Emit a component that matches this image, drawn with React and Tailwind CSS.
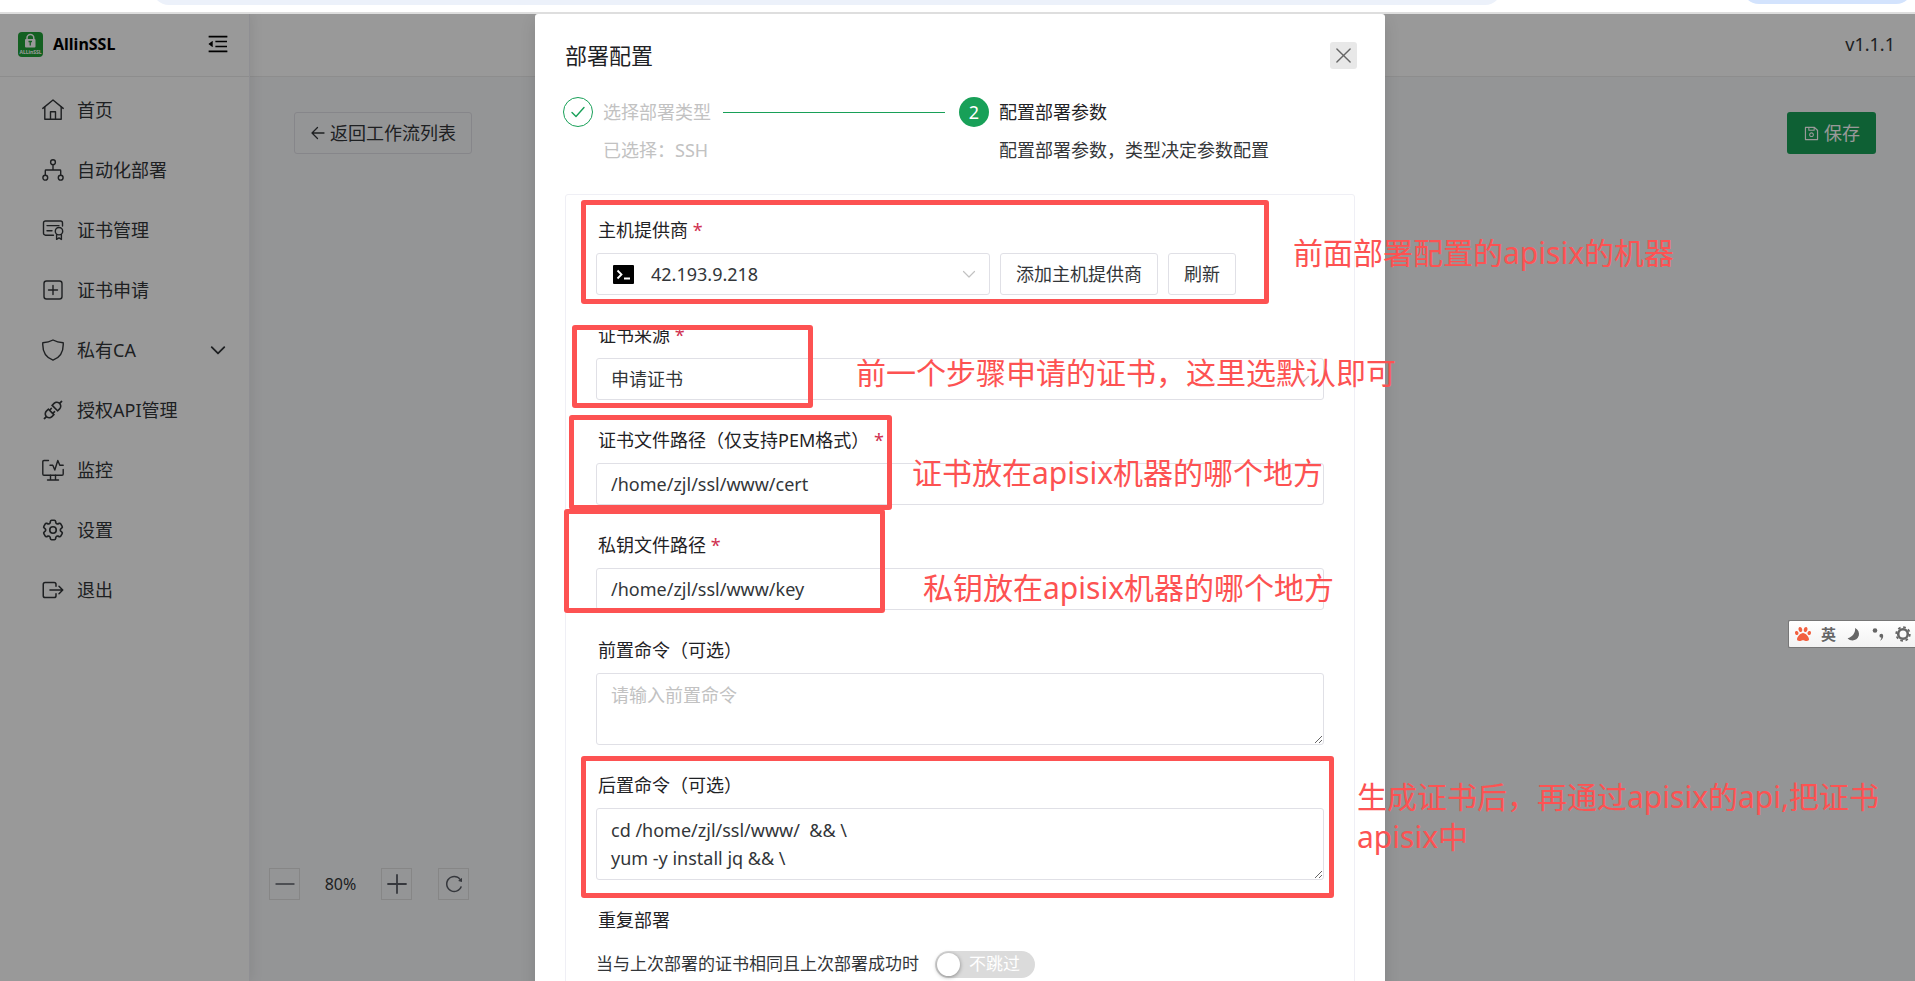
import React, { useState } from 'react';
import clsx from 'clsx';
import { AiOutlineApi, AiOutlineMenuFold, AiOutlineReload, AiOutlineSave } from 'react-icons/ai';
import { IoExitOutline } from 'react-icons/io5';
import { HiOutlineCog6Tooth } from 'react-icons/hi2';
import { FaPaw } from 'react-icons/fa';

function Icon({ size = 22, box = 22, sw = 1.4, className, children }) {
  return (
    <svg
      width={size}
      height={size}
      viewBox={`0 0 ${box} ${box}`}
      fill="none"
      stroke="currentColor"
      strokeWidth={sw}
      strokeLinecap="round"
      strokeLinejoin="round"
      className={clsx('shrink-0', className)}
      aria-hidden="true"
    >
      {children}
    </svg>
  );
}

const HomeIcon = () => (
  <Icon>
    <path d="M.8 9.4 11 1l10.2 8.4" />
    <path d="M2.8 8v12.2h16.4V8" />
    <path d="M8.5 20v-7.200h5V20" />
  </Icon>
);

const FlowIcon = () => (
  <Icon>
    <circle cx="11" cy="3.2" r="2.4" />
    <circle cx="3.3" cy="18.700" r="2.4" />
    <circle cx="18.7" cy="18.7" r="2.4" />
    <path d="M11 5.8V11M3.3 16v-4.300q0-.7.7-.7h14q.7 0 .7.7V16" />
  </Icon>
);

const CertIcon = () => (
  <Icon>
    <path d="M11.5 16.2H3.500a2 2 0 0 1-2-2V4a2 2 0 0 1 2-2h15a2 2 0 0 1 2 2v3" />
    <path d="M5 6.6h12M5 11.8h5" />
    <circle cx="17" cy="12.2" r="3.7" />
    <path d="M14.6 15.4v5l2.4-1.5 2.4 1.5v-5" />
  </Icon>
);

const ApplyIcon = () => (
  <Icon>
    <rect x="2" y="2" width="18" height="18" rx="2.5" />
    <path d="M11 6.5v9M6.5 11h9" />
  </Icon>
);

const ShieldIcon = () => (
  <Icon>
    <path d="M11 1c2.8 1.6 6.2 2.5 10.2 2.7C21.7 12 19 18.2 11 21.2 3 18.2.3 12 .8 3.7 4.800 3.5 8.2 2.6 11 1z" />
  </Icon>
);

const MonitorIcon = () => (
  <Icon>
    <path d="M6.5 1.5H2a1.2 1.2 0 0 0-1.2 1.2V15A1.2 1.2 0 0 0 2 16.2h18a1.2 1.2 0 0 0 1.2-1.2v-4.5" />
    <path d="M8.5 16.2V21M13.5 16.2V21M5.5 21h11" />
    <path d="M8 6.2h2.8l2 4.8 3-9.5 2 4.7h3.4" />
  </Icon>
);

const ChevronDown = ({ size = 14, sw = 1.4, className }) => (
  <Icon size={size} box={14} sw={sw} className={className}>
    <path d="m1.5 4.5 5.5 5.500 5.5-5.5" />
  </Icon>
);

const NAV = [
  { label: '首页', icon: <HomeIcon /> },
  { label: '自动化部署', icon: <FlowIcon /> },
  { label: '证书管理', icon: <CertIcon /> },
  { label: '证书申请', icon: <ApplyIcon /> },
  { label: '私有CA', icon: <ShieldIcon />, expandable: true },
  { label: '授权API管理', icon: <AiOutlineApi size={24} className="-m-px" /> },
  { label: '监控', icon: <MonitorIcon /> },
  { label: '设置', icon: <HiOutlineCog6Tooth size={26} className="-m-0.5" /> },
  { label: '退出', icon: <IoExitOutline size={24} className="-m-px" /> },
];

function BrowserEdge() {
  return (
    <div className="flex h-[14px] shrink-0 items-end overflow-hidden border-b-2 border-[#dedede] bg-white">
      <div className="mb-[7px] ml-[152px] h-[34px] flex-1 rounded-full bg-[#ecf1fa]" />
      <div className="mb-2 ml-60 mr-0.5 h-[34px] w-[171px] rounded-full bg-[#d3e3fd]" />
    </div>
  );
}

function Logo() {
  return (
    <svg width="25" height="25" viewBox="0 0 25 25" aria-hidden="true">
      <rect width="25" height="25" rx="4" fill="#20a038" />
      <path d="M9 7.5V6a3.4 3.4 0 0 1 6.8 0v1.5" fill="none" stroke="#fff" strokeWidth="1.5" />
      <rect x="7" y="7" width="10.5" height="8.5" rx="1" fill="#fff" />
      <path d="M10.5 9.5h3.5M12.250 9.5v4" stroke="#20a038" strokeWidth="1.3" />
      <text x="12.5" y="21.5" textAnchor="middle" fontSize="5" fontWeight="700" fill="#fff" className="font-['Noto_Sans']">
        ALLinSSL
      </text>
    </svg>
  );
}

function Sidebar() {
  return (
    <aside className="z-10 flex w-[250px] shrink-0 flex-col border-r border-[#efeff5] bg-white shadow-[2px_0_12px_rgba(0,0,0,0.08)]">
      <div className="flex h-[63px] items-center border-b border-[#ebebeb] pb-0.5 pl-[18px] pr-[19px]">
        <Logo />
        <span className="ml-2.5 text-base font-bold text-black">AllinSSL</span>
        <button type="button" aria-label="收起菜单" className="ml-auto">
          <AiOutlineMenuFold size={24} />
        </button>
      </div>
      <nav className="flex flex-col pt-[3px]">
        {NAV.map((item) => (
          <a key={item.label} href="#" className="flex h-[60px] items-center pl-[42px] pr-[23px] text-[18px] text-[#333639]">
            {item.icon}
            <span className="ml-[13px]">{item.label}</span>
            {item.expandable && <ChevronDown size={16} sw={1.6} className="ml-auto" />}
          </a>
        ))}
      </nav>
    </aside>
  );
}

function Workspace() {
  const box = 'flex h-8 w-[31px] items-center justify-center border border-[#e0e0e0] text-[#5a5e66]';
  return (
    <div className="flex min-w-0 flex-1 flex-col bg-[#f7f8fa]">
      <header className="flex h-[63px] shrink-0 items-center justify-end border-b border-[#ebebeb] bg-white pb-0.5 pr-5 text-[18px] text-[#333639]">
        v1.1.1
      </header>
      <div className="flex flex-1 flex-col pb-[81px] pl-[19px] pr-[39px] pt-[35px]">
        <div className="flex items-center justify-between pl-[25px]">
          <button type="button" className="flex h-[42px] items-center gap-1 rounded-[3px] border border-[#e0e0e6] px-[15px] text-[18px] text-[#333639]">
            <Icon size={16} box={16} sw={1.3}>
              <path d="M14 8H2.5M7.5 2.5 2 8l5.5 5.5" />
            </Icon>
            返回工作流列表
          </button>
          <button type="button" className="flex h-[42px] items-center gap-1 rounded-[3px] bg-[#18a058] px-4 text-[18px] text-white">
            <AiOutlineSave size={17} />
            保存
          </button>
        </div>
        <div className="mt-auto flex items-center">
          <button type="button" aria-label="缩小" className={box}>
            <Icon size={20} box={20}>
              <path d="M1 10h18" />
            </Icon>
          </button>
          <span className="w-[81px] text-center text-base text-[#333639]">80%</span>
          <button type="button" aria-label="放大" className={box}>
            <Icon size={20} box={20} sw={1.8}>
              <path d="M1 10h18M10 1v18" />
            </Icon>
          </button>
          <button type="button" aria-label="重置" className={clsx(box, 'ml-[26px]')}>
            <AiOutlineReload size={20} />
          </button>
        </div>
      </div>
    </div>
  );
}

function Steps() {
  return (
    <div className="-ml-0.5 mt-7 grid grid-cols-2 text-[18px]">
      <div className="flex gap-2.5">
        <span className="flex size-[30px] shrink-0 items-center justify-center rounded-full border border-[#18a058] text-[#18a058]">
          <Icon size={16} box={16}>
            <path d="m2 8.5 4 4 8-9" />
          </Icon>
        </span>
        <div className="flex-1 text-[#c2c2c2]">
          <div className="flex h-[30px] items-center gap-3">
            <span>选择部署类型</span>
            <span className="mr-3.5 h-px flex-1 bg-[#18a058]" />
          </div>
          <p className="mt-2 leading-[30px]">已选择：SSH</p>
        </div>
      </div>
      <div className="flex gap-2.5">
        <span className="flex size-[30px] shrink-0 items-center justify-center rounded-full bg-[#18a058] text-white">2</span>
        <div>
          <p className="leading-[30px] text-[#1f2225]">配置部署参数</p>
          <p className="mt-2 leading-[30px] text-[#333639]">配置部署参数，类型决定参数配置</p>
        </div>
      </div>
    </div>
  );
}

function Field({ id, label, required, children }) {
  return (
    <div className="mb-7">
      <label htmlFor={id} className="block pb-[11px] pl-0.5 text-[18px] leading-6 text-[#1f2225]">
        {label}
        {required && <span className="text-[#d03050]"> *</span>}
      </label>
      {children}
    </div>
  );
}

const control = 'w-full rounded-[3px] border border-[#e0e0e6] bg-white text-[18px] text-[#333639] outline-none placeholder:text-[#c2c2c2] focus:border-[#18a058]';

// red frames drawn over the form, measured from the dialog's corner
const FRAMES = [
  'left-[46px] top-[186px] h-[104px] w-[688px]',
  'left-[37px] top-[311px] h-[83px] w-[241px]',
  'left-[34px] top-[401px] h-[95px] w-[323px]',
  'left-[29px] top-[495px] h-[104px] w-[321px]',
  'left-[46px] top-[742px] h-[142px] w-[753px]',
];

const NOTES = [
  { text: '前面部署配置的apisix的机器', place: 'left-[758px] top-[219px]' },
  { text: '前一个步骤申请的证书，这里选默认即可', place: 'left-[321px] top-[339px]' },
  { text: '证书放在apisix机器的哪个地方', place: 'left-[377px] top-[439px]' },
  { text: '私钥放在apisix机器的哪个地方', place: 'left-[388px] top-[554px]' },
  { text: '生成证书后，再通过apisix的api,把证书\napisix中', place: 'left-[822px] top-[763px]' },
];

function Annotations() {
  return (
    <div className="pointer-events-none absolute inset-0 text-[30px] leading-10 text-[#fd5252]">
      {FRAMES.map((place) => (
        <div key={place} className={clsx('absolute rounded-[3px] border-[5px] border-[#fd5252]', place)} />
      ))}
      {NOTES.map((note) => (
        <p key={note.text} className={clsx('absolute whitespace-pre', note.place)}>
          {note.text}
        </p>
      ))}
    </div>
  );
}

function DeployDialog() {
  const [form, setForm] = useState({
    certPath: '/home/zjl/ssl/www/cert',
    keyPath: '/home/zjl/ssl/www/key',
    before: '',
    after: 'cd /home/zjl/ssl/www/  && \\\nyum -y install jq && \\',
    skip: false,
  });
  const update = (key) => (e) => setForm({ ...form, [key]: e.target.value });

  return (
    <section role="dialog" aria-labelledby="dialog-title" className="relative h-max w-[850px] shrink-0 rounded-[3px] bg-white px-[30px] pb-8 pt-7 shadow-[0_6px_16px_rgba(0,0,0,0.12)]">
      <div className="flex items-center justify-between">
        <h2 id="dialog-title" className="text-[22px] leading-[27px] text-[#1f2225]">部署配置</h2>
        <button type="button" aria-label="关闭" className="-mr-0.5 flex size-[27px] items-center justify-center rounded-[3px] bg-[#e8e8e8] text-[#666]">
          <Icon size={17} box={18} sw={1.5}>
            <path d="m2 2 14 14M16 2 2 16" />
          </Icon>
        </button>
      </div>

      <Steps />

      <form className="mt-[29px] rounded-[3px] border border-[#efeff5] px-[30px] pb-10 pt-[23px]">
        <Field id="provider" label="主机提供商" required>
          <div className="flex gap-2.5">
            <div className="relative w-[394px]">
              <select id="provider" className={clsx(control, 'h-[42px] appearance-none pl-[54px]')}>
                <option>42.193.9.218</option>
              </select>
              <svg width="21" height="19" viewBox="0 0 21 19" className="pointer-events-none absolute left-[17px] top-3" aria-hidden="true">
                <rect width="21" height="19" rx="1" fill="#000" />
                <path d="m4.5 5.5 4 4-4 4M11 13.5h6" fill="none" stroke="#fff" strokeWidth="1.8" />
              </svg>
              <ChevronDown sw={1.2} className="pointer-events-none absolute right-3.5 top-3.5 text-[#c2c2c2]" />
            </div>
            <button type="button" className="h-[42px] rounded-[3px] border border-[#e0e0e6] px-[15px] text-[18px] text-[#333639]">添加主机提供商</button>
            <button type="button" className="h-[42px] rounded-[3px] border border-[#e0e0e6] px-[15px] text-[18px] text-[#333639]">刷新</button>
          </div>
        </Field>

        <Field id="source" label="证书来源" required>
          <div className="relative">
            <select id="source" className={clsx(control, 'h-[42px] appearance-none pl-3.5')}>
              <option>申请证书</option>
            </select>
            <ChevronDown sw={1.2} className="pointer-events-none absolute right-3.5 top-3.5 text-[#c2c2c2]" />
          </div>
        </Field>

        <Field id="cert-path" label="证书文件路径（仅支持PEM格式）" required>
          <input id="cert-path" type="text" className={clsx(control, 'block h-[42px] px-3.5')} value={form.certPath} onChange={update('certPath')} />
        </Field>

        <Field id="key-path" label="私钥文件路径" required>
          <input id="key-path" type="text" className={clsx(control, 'block h-[42px] px-3.5')} value={form.keyPath} onChange={update('keyPath')} />
        </Field>

        <Field id="before" label="前置命令（可选）">
          <textarea id="before" placeholder="请输入前置命令" className={clsx(control, 'block h-[72px] px-3.5 py-[7px] leading-7')} value={form.before} onChange={update('before')} />
        </Field>

        <Field id="after" label="后置命令（可选）">
          <textarea id="after" className={clsx(control, 'block h-[72px] px-3.5 py-[7px] leading-7')} value={form.after} onChange={update('after')} />
        </Field>

        <Field id="skip" label="重复部署">
          <div className="flex h-[42px] items-center gap-4 text-[17px] text-[#333639]">
            <span>当与上次部署的证书相同且上次部署成功时</span>
            <label className="flex h-[27px] w-[100px] cursor-pointer items-center rounded-full bg-[#dbdbdb] p-0.5 text-white">
              <input
                id="skip"
                type="checkbox"
                role="switch"
                className="sr-only"
                checked={form.skip}
                onChange={(e) => setForm({ ...form, skip: e.target.checked })}
              />
              <span className="size-[23px] rounded-full bg-white shadow-[0_1px_4px_rgba(0,0,0,0.4)]" />
              <span className="ml-[9px]">不跳过</span>
            </label>
          </div>
        </Field>
      </form>

      <Annotations />
    </section>
  );
}

function InputMethodBar() {
  return (
    <div className="absolute right-0 top-[606px] flex h-7 w-[127px] items-center gap-2.5 overflow-hidden rounded-l-[2px] border border-r-0 border-[#777] bg-gradient-to-b from-white to-[#f2f2f2] pl-1.5 text-[#666]">
      <FaPaw size={16} className="shrink-0 text-[#f26040]" />
      <span className="text-[15px] font-bold leading-none">英</span>
      <Icon size={15} box={14}>
        <path d="M8.500 1C9 5.5 6 9.5 1.5 10.5c3 3.5 9 2.5 10.5-2.5.6-2.5-.5-5.5-3.5-7z" fill="currentColor" strokeWidth="0" />
      </Icon>
      <Icon size={14} box={14}>
        <circle cx="4" cy="3.5" r="2.3" fill="currentColor" strokeWidth="0" />
        <path d="M10.3 6.8a1.9 1.9 0 0 1 1.9 1.9c0 2.3-1.2 4.3-3.2 5 1-1 1.4-2 1.3-3.1a1.9 1.9 0 0 1 0-3.8z" fill="currentColor" strokeWidth="0" />
      </Icon>
      <Icon size={16} box={16}>
        <circle cx="8" cy="8" r="4.8" strokeWidth="2.6" />
        <circle cx="8" cy="8" r="6.8" strokeWidth="1.8" strokeDasharray="2.67 2.67" strokeLinecap="butt" />
      </Icon>
    </div>
  );
}

export default function App() {
  return (
    <div className="flex h-screen flex-col overflow-hidden font-['Noto_Sans','Noto_Sans_CJK_SC',sans-serif]">
      <BrowserEdge />
      <main className="relative flex min-h-0 flex-1 overflow-hidden">
        <Sidebar />
        <Workspace />
        <div className="absolute inset-0 z-20 flex justify-center overflow-hidden bg-black/40 pl-[5px]">
          <DeployDialog />
          <InputMethodBar />
        </div>
      </main>
    </div>
  );
}
